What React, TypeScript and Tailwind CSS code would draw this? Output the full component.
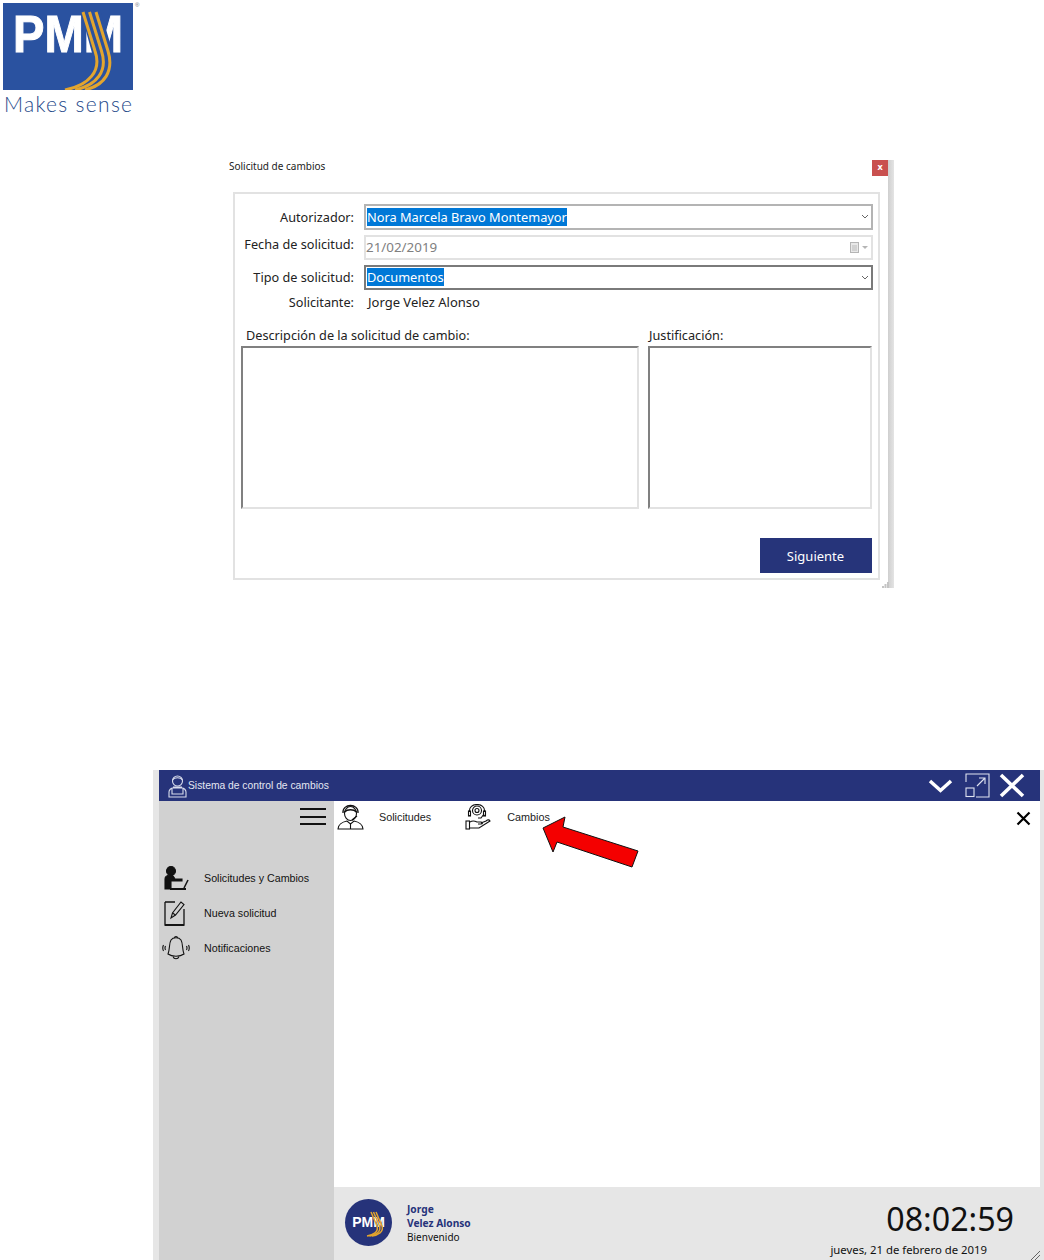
const segoe = "font-['Noto_Sans','Open_Sans',sans-serif]";

function PmmLogo() {
  return (
    <svg width="130" height="87" viewBox="0 0 130 87">
      <rect width="130" height="87" fill="#2a52a0" />
      <text x="10" y="49" fontFamily="Liberation Sans" fontWeight="700" fontSize="52" fill="#fff" stroke="#fff" strokeWidth="1" textLength="110" lengthAdjust="spacingAndGlyphs">PMM</text>
      <path d="M77 6 L97 6 L110 50 L89 50 Z" fill="#2a52a0" />
      <g fill="none" stroke="#e3a52e" strokeWidth="3">
        <path d="M80 9 L92 48 C99 68 86 82 62 87" />
        <path d="M86.500 9 L98.500 48 C105 68 94 82 72 87" />
        <path d="M93 9 L105 48 C111 68 102 82 82 87" />
      </g>
    </svg>
  );
}

function CombinedHeader() {
  return (
    <div className="h-[160px] pl-[3px] pt-[3px]">
      <div className="flex items-start">
        <PmmLogo />
        <span className="text-[6px] leading-none mt-[-1px] ml-[2px] text-gray-500 font-['Liberation_Sans',sans-serif]">®</span>
      </div>
      <div className="mt-[1px] ml-[1px] text-[21px] leading-[25px] tracking-[1.300px] text-[#1f4a8a] font-['Lato',sans-serif] font-light whitespace-nowrap">Makes sense</div>
    </div>
  );
}

function Chevron() {
  return (
    <svg width="8" height="6" viewBox="0 0 8 6" className="shrink-0">
      <path d="M1 1 L4 4 L7 1" fill="none" stroke="#666" strokeWidth="1" />
    </svg>
  );
}

function Combo({ value, mt, h, border, lift = "" }: { value: string; mt: string; h: string; border: string; lift?: string }) {
  return (
    <div className={`flex items-center justify-between pl-[1px] pr-[2px] border-2 ${mt} ${h} ${border} w-[509px] ml-[129px]`}>
      <span className={`bg-[#0078d7] text-white text-[12.800px] leading-[18px] whitespace-nowrap ${lift}`}>{value}</span>
      <Chevron />
    </div>
  );
}

function Dialog() {
  return (
    <div className={`relative ml-[229px] w-[666px] h-[428px] flex ${segoe} text-[#222]`}>
      <div className="w-[659px] flex flex-col">
        <div className="flex h-[32px] justify-between">
          <span className="text-[10px] leading-[14px] mt-[-1px]">Solicitud de cambios</span>
          <div className="w-[16px] h-[16px] bg-[#c9504f] text-white text-[9px] leading-[14px] font-bold text-center">x</div>
        </div>
        <div className="relative ml-[4px] w-[647px] h-[388px] border-2 border-[#e2e2e2] text-[12.700px]">
          <div className="absolute left-0 top-[14px] w-[119px] flex flex-col items-end leading-[18px] whitespace-nowrap">
            <span>Autorizador:</span>
            <span className="mt-[9px]">Fecha de solicitud:</span>
            <span className="mt-[15px]">Tipo de solicitud:</span>
            <span className="mt-[7px]">Solicitante:</span>
          </div>
          <Combo value="Nora Marcela Bravo Montemayor" mt="mt-[10px]" h="h-[26px]" border="border-[#b4b4b4]" />
          <div className="mt-[5px] ml-[129px] w-[509px] h-[25px] border-2 border-[#e2e2e2] flex items-center justify-between pr-[3px]">
            <span className="text-[13.400px] text-[#808080]">21/02/2019</span>
            <span className="flex items-center gap-[2px]">
              <svg width="10" height="11" viewBox="0 0 10 11"><rect x="0.500" y="0.500" width="8" height="10" fill="#e8e8e8" stroke="#b5b5b5" /><path d="M2 4h5M2 6h5M2 8h5" stroke="#bbb" /></svg>
              <svg width="6" height="4" viewBox="0 0 6 4"><path d="M0 0h6L3 3z" fill="#b5b5b5" /></svg>
            </span>
          </div>
          <Combo value="Documentos" mt="mt-[5px]" h="h-[25px]" border="border-[#7a7a7a]" lift="mb-[2px]" />
          <div className="ml-[133px] mt-[3px] text-[13px] leading-[18px]">Jorge Velez Alonso</div>
          <div className="flex mt-[15px] ml-[6px] gap-[9px]">
            <div className="w-[398px]">
              <div className="ml-[5px] leading-[18px] mb-[2px]">Descripción de la solicitud de cambio:</div>
              <div className="h-[163px] border-2 border-t-[#808080] border-l-[#808080] border-r-[#e2e2e2] border-b-[#e2e2e2]" />
            </div>
            <div className="w-[224px]">
              <div className="ml-[1px] leading-[18px] mb-[2px]">Justificación:</div>
              <div className="h-[163px] border-2 border-t-[#808080] border-l-[#808080] border-r-[#e2e2e2] border-b-[#e2e2e2]" />
            </div>
          </div>
          <div className="flex justify-end mt-[29px] mr-[6px]">
            <button className="w-[112px] h-[35px] pt-[2px] pr-[1px] bg-[#26347a] text-white text-[13px]">Siguiente</button>
          </div>
        </div>
      </div>
      <div className="w-[6px] bg-gradient-to-r from-[#cfcfcf] to-[#e4e4e4]" />
      <svg width="7" height="6" viewBox="0 0 7 6" fill="#c4c4c4" className="absolute left-[653px] bottom-0">
        <rect x="5" y="0" width="2" height="2" />
        <rect x="2.500" y="2" width="2" height="2" />
        <rect x="5" y="2" width="2" height="2" />
        <rect x="0" y="4" width="2" height="2" />
        <rect x="2.500" y="4" width="2" height="2" />
        <rect x="5" y="4" width="2" height="2" />
      </svg>
    </div>
  );
}

function LineIcon({ children, w = 28, h = 26 }: { children: React.ReactNode; w?: number; h?: number }) {
  return (
    <svg width={w} height={h} viewBox={`0 0 ${w} ${h}`} fill="none" stroke="#111" strokeWidth="1.100" className="shrink-0">
      {children}
    </svg>
  );
}

const sideItems = [
  {
    label: "Solicitudes y Cambios",
    icon: (
      <LineIcon>
        <circle cx="9" cy="6" r="4.500" fill="#111" />
        <path d="M3 24V14c0-3 3-4 6-4 2 0 3 2 4 4h7v2H9v8z" fill="#111" />
        <path d="M8 24h16" strokeWidth="2" />
        <path d="M22 23l4-8" strokeWidth="1.600" />
      </LineIcon>
    ),
  },
  {
    label: "Nueva solicitud",
    icon: (
      <LineIcon>
        <path d="M3 2h10M3 2v23h19V9" strokeWidth="1.300" />
        <path d="M3 25h19" strokeWidth="1.800" />
        <path d="M9 18l1.500-5L19 2l3 2.500L13.500 15z" />
        <path d="M10.500 13l3 2" />
      </LineIcon>
    ),
  },
  {
    label: "Notificaciones",
    icon: (
      <LineIcon>
        <path d="M6 19C8 14 7 8 9 5c2-3 8-3 10 0 2 3 1 9 3 14-4 3-12 3-16 0z" />
        <path d="M11 21.500c1 3 5 3 6 0M12.500 3c0-2 3-2 3 0" />
        <path d="M1.500 10c-1 2-1 4 0 6M3.500 11c-.500 1-.500 3 0 4M26.500 10c1 2 1 4 0 6M24.500 11c.500 1 .500 3 0 4" />
      </LineIcon>
    ),
  },
];

function Sidebar() {
  return (
    <div className="w-[175px] shrink-0 bg-[#d1d1d1]">
      <div className="flex justify-end pr-[8px] pt-[7px] h-[64px]">
        <div className="w-[26px] h-[17px] flex flex-col justify-between">
          <div className="h-[2px] bg-[#111]" />
          <div className="h-[2px] bg-[#111]" />
          <div className="h-[2px] bg-[#111]" />
        </div>
      </div>
      <div className="flex flex-col gap-[9px] pl-[3px]">
        {sideItems.map((item) => (
          <div key={item.label} className="flex items-center h-[26px] gap-[14px] text-[10.700px] font-['Liberation_Sans',sans-serif] text-[#111]">
            {item.icon}
            <span>{item.label}</span>
          </div>
        ))}
      </div>
    </div>
  );
}

function AppWindow() {
  return (
    <div className="ml-[153px] mt-[182px] w-[891px] h-[490px] flex flex-col pl-[6px] pr-[4px] bg-[#e6e6e6]">
      <div className="h-[31px] shrink-0 bg-[#26337a] flex items-center justify-between text-white">
        <div className="flex items-center pl-[8px]">
          <svg width="21" height="24" viewBox="0 0 21 24" fill="none" stroke="#d8dcec" strokeWidth="1.100">
            <circle cx="10.500" cy="7" r="5" />
            <path d="M5.500 6c2-3 8-3 10 0M6 13h9M2 23v-5c0-2 2-4 4-4h9c2 0 4 2 4 4v5zM5 14v6h11v-6" />
          </svg>
          <span className="text-[10.300px] mt-[1px] text-[#e4e7f2] font-['Liberation_Sans',sans-serif]">Sistema de control de cambios</span>
        </div>
        <div className="flex items-center pr-[15px]">
          <svg width="25" height="14" viewBox="0 0 25 14" className="mr-[12px]"><path d="M2 2l10.500 9.500L23 2" fill="none" stroke="#fff" strokeWidth="3.500" /></svg>
          <svg width="25" height="25" viewBox="0 0 25 25" fill="none" stroke="#dfe3f0" strokeWidth="1.100" className="mr-[9px]">
            <path d="M1 9V1h23v23h-13" />
            <rect x="1" y="15" width="8" height="8.500" />
            <path d="M12 13l8-8M14 5h6v6" />
          </svg>
          <svg width="26" height="25" viewBox="0 0 26 25"><path d="M2 2l22 21M24 2L2 23" stroke="#fff" strokeWidth="3.600" /></svg>
        </div>
      </div>
      <div className="flex flex-1 min-h-0">
        <Sidebar />
        <div className="flex-1 flex flex-col">
          <div className="relative flex-1 bg-white">
            <div className="flex items-center pl-[3px] pt-[3px] text-[10.800px] font-['Liberation_Sans',sans-serif] text-[#222]">
              <LineIcon w={27} h={26}>
                <ellipse cx="13.500" cy="9.500" rx="6" ry="7" />
                <path d="M6 9C5 -1 22 -1 21 9M7.500 8c3-3 9-3 12 0M20 12l-5 4" strokeWidth="1.300" />
                <path d="M1 25c0-4 4-7 9-8l3.500 3 3.500-3c5 1 9 4 9 8z" />
                <path d="M13.500 20v5" />
              </LineIcon>
              <span className="ml-[15px]">Solicitudes</span>
              <span className="ml-[34px]">
                <LineIcon w={26} h={26}>
                  <circle cx="12" cy="6.500" r="2" />
                  <circle cx="12" cy="6.500" r="4.500" />
                  <path d="M4.500 8C3 -2 21 -2 19.500 8M19 10l-3 4h-3" />
                  <rect x="3.500" y="7" width="2" height="5" />
                  <rect x="18.500" y="7" width="2" height="5" />
                  <rect x="1" y="17" width="3.500" height="8" />
                  <path d="M5 18c3-2 5-1 7 0h4c2 0 2 2 0 2h-3M5 24h9l11-7c-1-2-3-1-4 0l-5 2" />
                </LineIcon>
              </span>
              <span className="ml-[16px]">Cambios</span>
              <svg width="15" height="15" viewBox="0 0 15 15" className="ml-auto mr-[9px] mt-[2px]"><path d="M1.500 1.500l12 12M13.500 1.500l-12 12" stroke="#000" strokeWidth="2.200" /></svg>
            </div>
            <svg width="98" height="54" viewBox="0 0 98 54" className="absolute left-[208px] top-[15px]">
              <polygon points="23,1 1,12 11,36 15,26 90,51 96,35 21,11" fill="#f40000" stroke="#111" strokeWidth="1" />
            </svg>
          </div>
          <div className="relative h-[73px] shrink-0 bg-[#e6e6e6] flex">
            <div className="flex items-center pl-[11px]">
              <div className="w-[47px] h-[47px] rounded-full bg-[#26337a] flex items-center justify-center relative mt-[-3px]">
                <span className="text-white font-bold text-[14px] leading-none font-['Liberation_Sans',sans-serif]">PMM</span>
                <svg width="22" height="30" viewBox="0 0 22 30" className="absolute left-[18px] top-[11px]" fill="none" stroke="#e3a52e" strokeWidth="1.500">
                  <path d="M8 2l6 14c2 6-4 9-10 10" />
                  <path d="M10.500 2l6 14c2 6-4 9-10 10" />
                  <path d="M13 2l6 14c2 6-4 9-10 10" />
                </svg>
              </div>
            </div>
            <div className={`ml-[15px] pt-[15px] text-[10.200px] leading-[14px] ${segoe}`}>
              <div className="font-bold text-[#26337a]">Jorge</div>
              <div className="font-bold text-[#26337a]">Velez Alonso</div>
              <div className="text-[#111] text-[10px]">Bienvenido</div>
            </div>
            <div className={`ml-auto mr-[26px] pt-[9px] flex flex-col items-end ${segoe} text-[#111]`}>
              <div className="text-[32.200px] leading-[46px]">08:02:59</div>
              <div className="text-[11.350px] leading-[16px] mr-[27px]">jueves, 21 de febrero de 2019</div>
            </div>
            <svg width="10" height="10" viewBox="0 0 10 10" className="absolute right-0 bottom-0" stroke="#666" fill="none">
              <path d="M1 10L10 1M5 10L10 5" />
            </svg>
          </div>
        </div>
      </div>
    </div>
  );
}

export default function App() {
  return (
    <div className="w-[1044px] h-[1260px] bg-white overflow-hidden">
      <CombinedHeader />
      <Dialog />
      <AppWindow />
    </div>
  );
}
